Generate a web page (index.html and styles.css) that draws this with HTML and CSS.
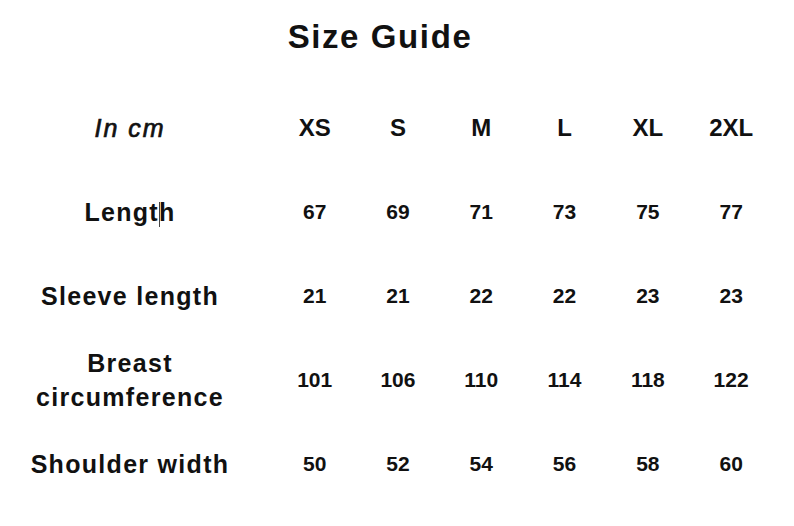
FILE: index.html
```html
<!DOCTYPE html>
<html lang="en">
<head>
<meta charset="utf-8">
<title>Size Guide</title>
<link rel="stylesheet" href="styles.css">
</head>
<body>
<main class="page">
  <h1 class="title">Size Guide</h1>
  <div class="chart">
    <div class="label unit">In cm</div>
    <div class="size">XS</div>
    <div class="size">S</div>
    <div class="size">M</div>
    <div class="size">L</div>
    <div class="size">XL</div>
    <div class="size">2XL</div>

    <div class="label">Lengt<span class="caret"></span>h</div>
    <div class="val">67</div>
    <div class="val">69</div>
    <div class="val">71</div>
    <div class="val">73</div>
    <div class="val">75</div>
    <div class="val">77</div>

    <div class="label">Sleeve length</div>
    <div class="val">21</div>
    <div class="val">21</div>
    <div class="val">22</div>
    <div class="val">22</div>
    <div class="val">23</div>
    <div class="val">23</div>

    <div class="label two">Breast<br>circumference</div>
    <div class="val">101</div>
    <div class="val">106</div>
    <div class="val">110</div>
    <div class="val">114</div>
    <div class="val">118</div>
    <div class="val">122</div>

    <div class="label">Shoulder width</div>
    <div class="val">50</div>
    <div class="val">52</div>
    <div class="val">54</div>
    <div class="val">56</div>
    <div class="val">58</div>
    <div class="val">60</div>
  </div>
</main>
</body>
</html>
```

FILE: styles.css
```css
html, body {
  margin: 0;
  padding: 0;
  background: #ffffff;
}

body {
  font-family: "Liberation Sans", Arial, sans-serif;
  color: #111111;
}

.page {
  width: 794px;
  height: 526px;
  overflow: hidden;
}

.title {
  margin: 17px 0 29px 0;
  padding-right: 34px;
  height: 40px;
  line-height: 40px;
  text-align: center;
  font-size: 33px;
  font-weight: 700;
  letter-spacing: 1.6px;
}

.chart {
  display: grid;
  grid-template-columns: 273px repeat(6, 83.3px);
  grid-auto-rows: 84px;
  align-items: center;
}

.label {
  padding-right: 13px;
  text-align: center;
  font-size: 25px;
  font-weight: 700;
  letter-spacing: 1.3px;
  line-height: 34px;
}

.label.unit {
  font-style: italic;
  font-weight: 400;
  font-size: 25px;
  letter-spacing: 2px;
  -webkit-text-stroke: 0.7px #111111;
}

.caret {
  display: inline-block;
  width: 0;
  height: 25px;
  border-left: 1px solid #444444;
  margin-right: -1px;
  vertical-align: -6px;
}

.size {
  text-align: center;
  font-size: 24px;
  font-weight: 700;
}

.val {
  text-align: center;
  font-size: 21px;
  font-weight: 700;
}
```
